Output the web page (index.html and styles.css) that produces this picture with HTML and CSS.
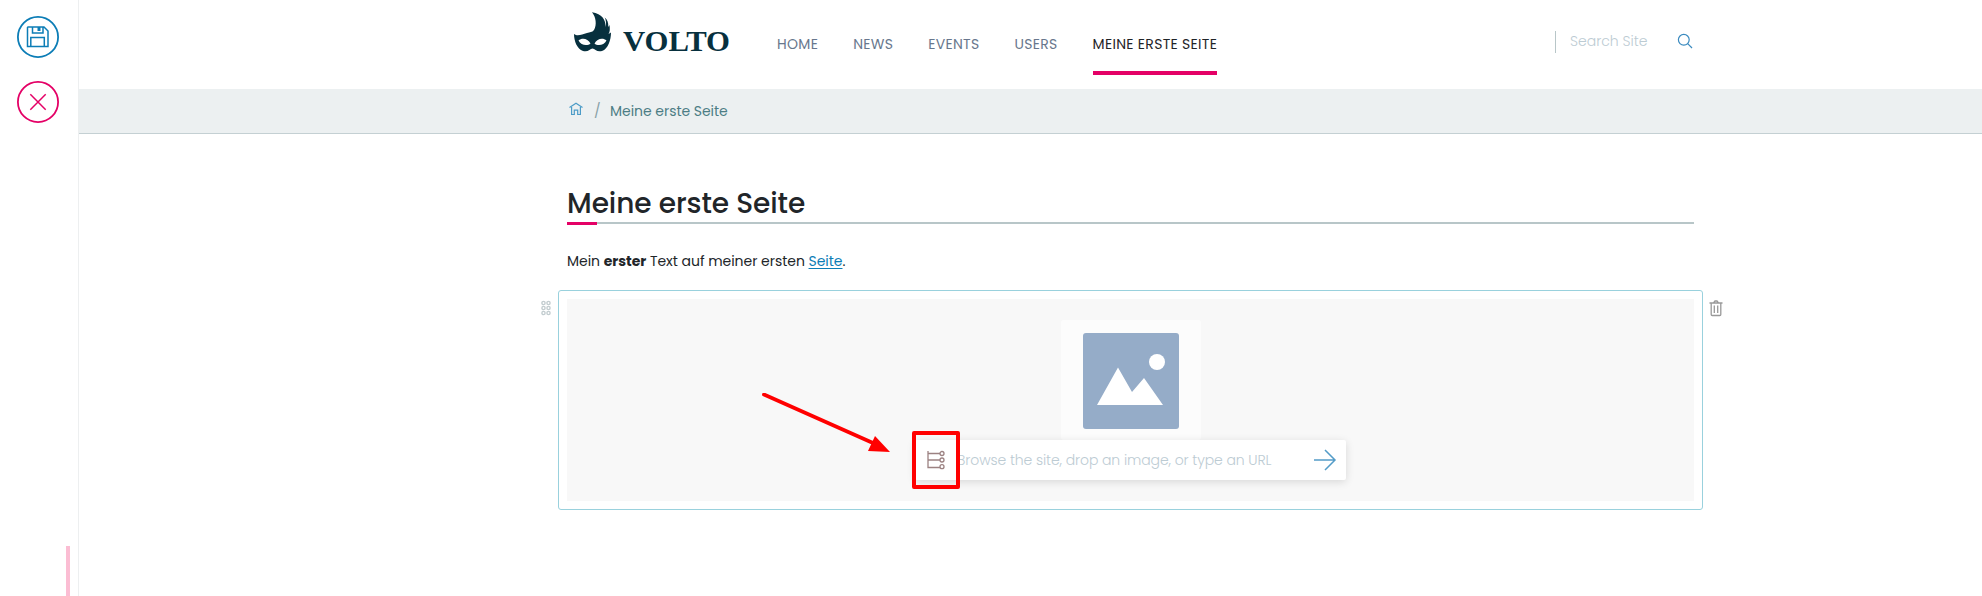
FILE: index.html
```html
<!DOCTYPE html>
<html lang="de">
<head>
<meta charset="utf-8">
<title>Meine erste Seite</title>
<link rel="stylesheet" href="styles.css">
</head>
<body>
<div class="app">
  <aside class="toolbar">
    <button class="tool save" aria-label="Speichern">
      <svg width="42" height="42" viewBox="0 0 42 42" fill="none" stroke="currentColor"><circle cx="21" cy="21" r="20.1" stroke-width="1.8"/><path d="M11 11h16l4 4v15.500h-20.500v-19zM15.500 11v6h10.500v-6M13.800 30v-8.500h13.500v8.500" stroke-width="1.500"/><path d="M20.500 11h3v4h-3z" fill="currentColor" stroke="none"/></svg>
    </button>
    <button class="tool cancel" aria-label="Abbrechen">
      <svg width="42" height="42" viewBox="0 0 42 42" fill="none" stroke="currentColor"><circle cx="21" cy="21" r="20.1" stroke-width="1.8"/><path d="M13.300 13.300l15.400 15.400M28.700 13.300l-15.400 15.400" stroke-width="1.500"/></svg>
    </button>
    <span class="handle"></span>
  </aside>
  <div class="page">
    <header class="header">
      <a class="logo">
        <svg width="160" height="56" viewBox="567 0 160 56" overflow="visible"><path fill="#07303e" fill-rule="evenodd" d="M574 34C578 37 582 34 587 33C590 32 592 32.500 594 30C597 25 596 17 592 12.300C602 14 606 20 605.500 27C606.500 24 606 20 604.700 17.500C607.500 19.500 608.500 23 608.300 27L609.500 25C610 29 610 32 608.500 34L611 32.500C611 40 608 49 602 51C597 52.500 595 49 592.500 48.500C590 49 588 52.500 583 51C577 49 574 41 574 34ZM578.500 40.500C581 46 588 46 590.500 43.500C588 38.500 582 37.500 578.500 40.500ZM594.500 43.500C597 46 604 46 606.500 40.500C603 37.500 597 38.500 594.500 43.500Z"/><text class="wordmark" x="623" y="51" textLength="107" lengthAdjust="spacingAndGlyphs">VOLTO</text></svg>
      </a>
      <nav class="nav"><a>HOME</a><a>NEWS</a><a>EVENTS</a><a>USERS</a><a class="active">MEINE ERSTE SEITE</a></nav>
      <div class="search"><span>Search Site</span>
        <svg width="16" height="16" viewBox="0 0 16 16" fill="none" stroke="#3a8abf" stroke-width="1.200"><circle cx="6.800" cy="6.800" r="5.400"/><path d="M10.700 10.700l4.300 4.300"/></svg>
      </div>
    </header>
    <div class="breadcrumbs">
      <svg width="14" height="14" viewBox="0 0 14 14" fill="none" stroke="#4b9bc7" stroke-width="1.200"><path d="M.5 5.500L7 1.200L13.500 5.500M2.600 5v7.500h2.700v-4.300h3.400v4.300h2.700v-7.500"/></svg>
      <span class="slash">/</span><span class="crumb">Meine erste Seite</span>
    </div>
    <main class="content">
      <h1 class="title"><span>Meine erste Seite</span></h1>
      <p class="text">Mein <b>erster</b> Text auf meiner ersten <a>Seite</a>.</p>
      <section class="block">
        <svg class="drag" width="10" height="16" viewBox="0 0 10 16" fill="none" stroke="#c3cdd0" stroke-width="1.400"><circle cx="2.500" cy="3" r="1.600"/><circle cx="7.500" cy="3" r="1.600"/><circle cx="2.500" cy="8" r="1.600"/><circle cx="7.500" cy="8" r="1.600"/><circle cx="2.500" cy="13" r="1.600"/><circle cx="7.500" cy="13" r="1.600"/></svg>
        <svg class="trash" width="14" height="17" viewBox="0 0 14 17" fill="none" stroke="#999" stroke-width="1.300"><path d="M.5 3h13M4.500 3l1.500-2h2l1.500 2M2.200 3v11.500q0 1 1 1h7.600q1 0 1-1v-11.500M5.300 5.500v7.500M8.700 5.500v7.500"/></svg>
        <div class="dropzone">
          <div class="placeholder">
            <svg width="96" height="96" viewBox="0 0 96 96"><rect width="96" height="96" rx="3" fill="#95acc8"/><circle cx="74" cy="29" r="8" fill="#fff"/><path d="M14 72L35 34.500L49 59L61 45L80 72z" fill="#fff"/></svg>
          </div>
          <div class="picker">
            <svg width="20" height="20" viewBox="0 0 20 20" fill="none" stroke="#9c8282" stroke-width="1.300"><path d="M2 1v16.500h12M2 3.500h12M2 10h12"/><circle cx="16" cy="3.500" r="2"/><circle cx="16" cy="10" r="2"/><circle cx="16" cy="16.700" r="2"/></svg>
            <span>Browse the site, drop an image, or type an URL</span>
            <svg width="24" height="22" viewBox="0 0 24 22" fill="none" stroke="#549cc8" stroke-width="1.500"><path d="M1 11h21M12 1l10 10l-10 10"/></svg>
          </div>
        </div>
        <svg class="arrow" width="128" height="60" viewBox="762 393 128 60"><path d="M764 394.500L873 443" stroke="#f00" stroke-width="3.800" stroke-linecap="round"/><path d="M875 436L868 451L890 452z" fill="#f00"/></svg>
        <span class="highlight"></span>
      </section>
    </main>
  </div>
</div>
</body>
</html>
```
FILE: styles.css
```css
* { box-sizing: border-box; }
body { margin: 0; background: #fff; color: #212529; font: 14px/20px Poppins, Inter, "Open Sans", sans-serif; }
svg { display: block; flex: none; }
.app { display: flex; height: 596px; overflow: hidden; }
.toolbar { width: 79px; flex: none; border-right: 1px solid #edeff0; padding: 16px 0 0 17px; display: flex; flex-direction: column; gap: 23px; }
.tool { border: 0; padding: 0; background: none; width: 42px; height: 42px; }
.save { color: #0c7db6; }
.cancel { color: #e40166; }
.handle { width: 4px; height: 50px; margin: auto 0 0 49px; background: #fbbdd3; }
.page { flex: 1; }
.header { height: 89px; padding: 0 288px 0 488px; display: flex; }
.logo { width: 160px; margin-right: 50px; }
.wordmark { font: bold 30px "Liberation Serif", serif; fill: #07303e; }
.nav { display: flex; gap: 35px; padding-top: 34px; white-space: nowrap; color: #68778d; letter-spacing: .3px; }
.nav a { height: 41px; }
.nav .active { color: #1f2428; border-bottom: 4px solid #e40166; }
.search { margin: 31px 0 0 auto; height: 22px; width: 139px; border-left: 1px solid #b8c6c8; padding-left: 14px; display: flex; justify-content: space-between; color: #bccbd3; font-weight: 300; }
.search svg { margin: 2px 1px 0 0; }
.breadcrumbs { height: 45px; background: #ecf0f1; border-bottom: 1px solid #c4d0d3; padding: 12px 0 0 490px; display: flex; color: #4c7d85; }
.breadcrumbs svg { margin-top: 1px; }
.slash { margin-left: 11px; width: 16px; color: #89a1a7; }
.crumb { letter-spacing: -.04px; }
.content { width: 1127px; margin-left: 488px; }
.title { margin: 50px 0 0; height: 40px; padding-top: 2px; border-bottom: 2px solid #b8c6c8; font-size: 28px; line-height: 36px; font-weight: 500; letter-spacing: -.07px; position: relative; }
.title::after { content: ""; position: absolute; left: 0; bottom: -3px; width: 30px; height: 3px; background: #e40166; }
.text { margin: 27px 0 0; letter-spacing: -.035px; }
.text a { color: #0c7db6; text-decoration: underline; text-underline-offset: 2px; }
.block { position: relative; margin: 19px -9px 0; height: 220px; border: 1px solid #99d1dd; border-radius: 3px; padding: 8px; }
.drag { position: absolute; left: -18px; top: 9px; }
.trash { position: absolute; right: -21px; top: 9px; }
.dropzone { height: 202px; background: #f8f8f8; padding-top: 21px; display: flex; flex-direction: column; align-items: center; }
.placeholder { width: 140px; height: 120px; padding: 13px 22px; border-radius: 3px; background: #fcfcfc; }
.picker { width: 431px; height: 40px; background: #fff; border-radius: 2px; box-shadow: 0 2px 8px #0002; display: flex; align-items: center; padding: 0 9px 0 11px; color: #bccbd3; font-weight: 300; position: relative; }
.picker span { margin: -1px auto 0 11px; white-space: nowrap; letter-spacing: -.09px; }
.arrow { position: absolute; left: 203px; top: 102px; }
.highlight { position: absolute; left: 353px; top: 140px; width: 48px; height: 58px; border: 4px solid #f00; border-radius: 2px; }
```
